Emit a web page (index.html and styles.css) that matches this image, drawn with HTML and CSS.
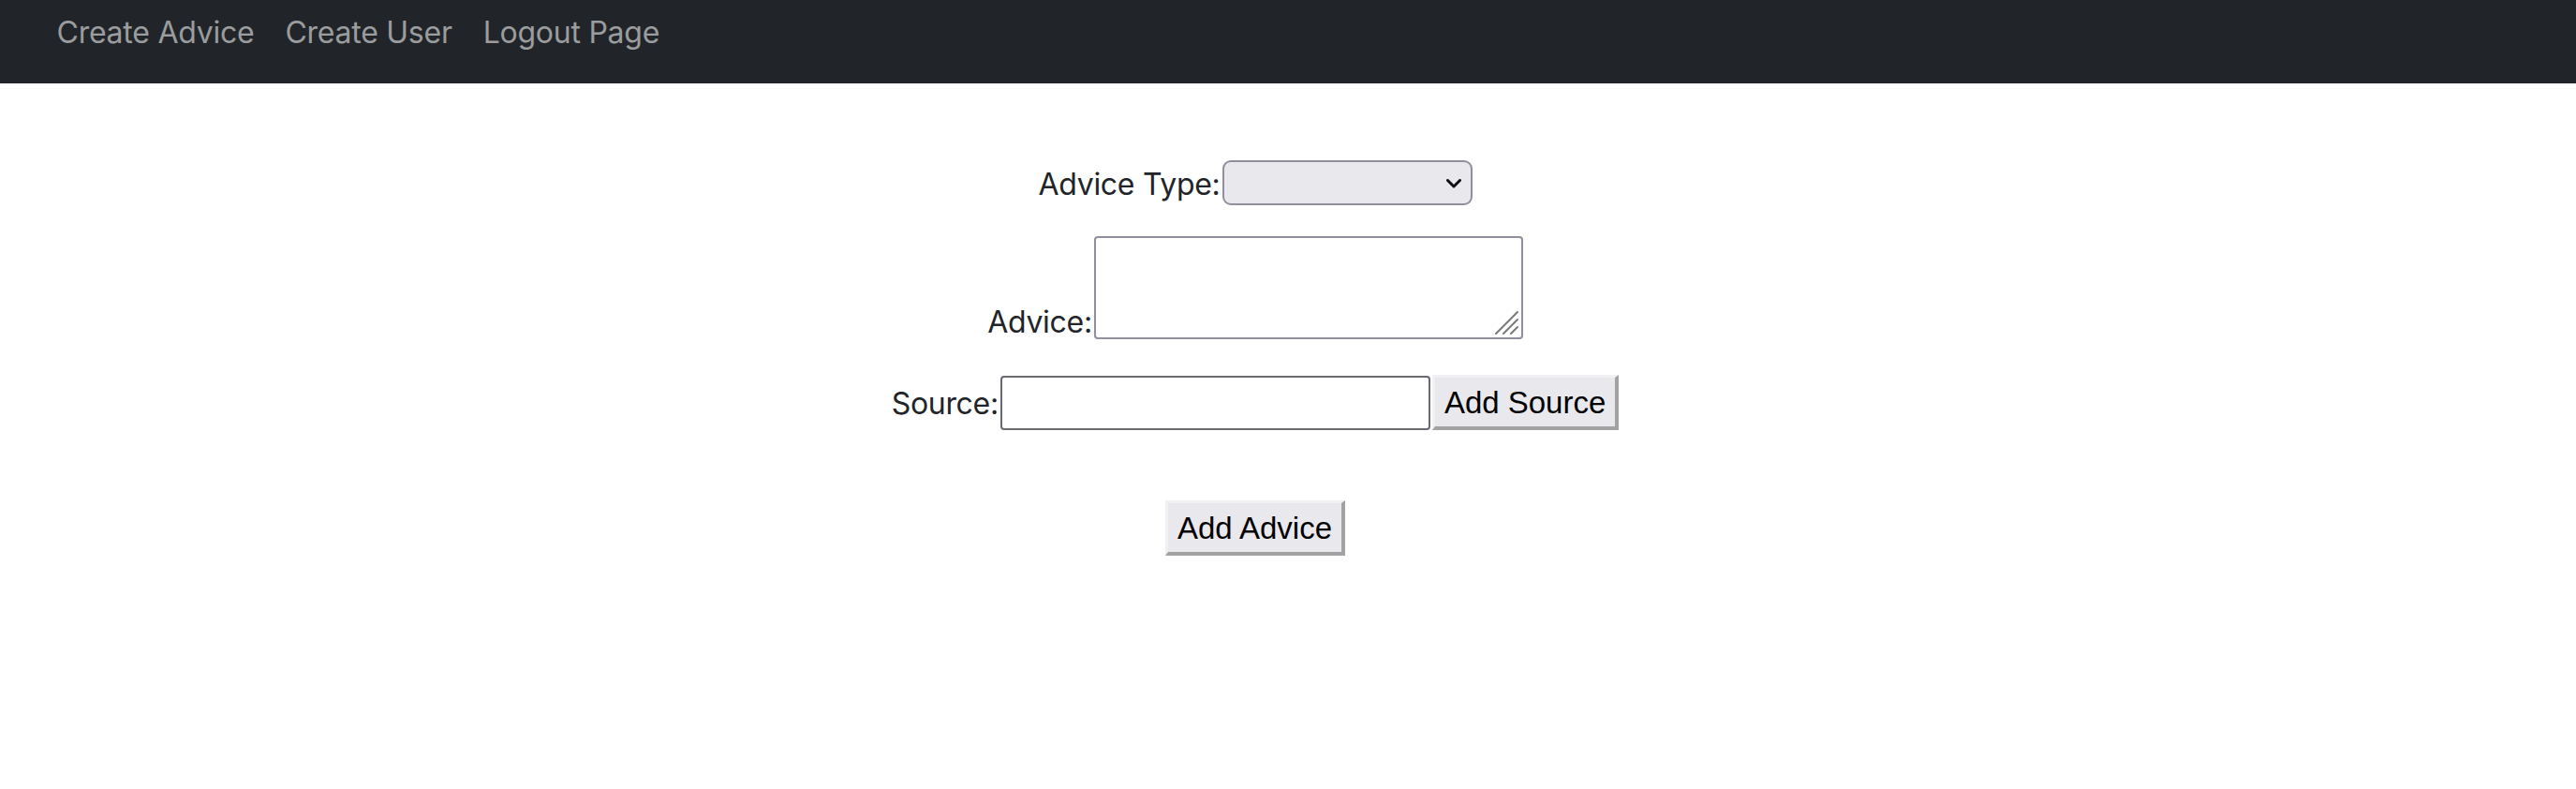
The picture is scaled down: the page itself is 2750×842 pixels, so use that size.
FILE: index.html
```html
<!DOCTYPE html>
<html lang="en">
<head>
<meta charset="utf-8">
<title>Create Advice</title>
<link rel="stylesheet" href="styles.css">
</head>
<body>
<nav class="navbar">
  <a class="nav-link" href="#">Create Advice</a>
  <a class="nav-link" href="#">Create User</a>
  <a class="nav-link" href="#">Logout Page</a>
</nav>
<main class="content">
  <form class="advice-form">
    <div class="row row-type">
      <label class="label label-mid" for="type">Advice Type:</label>
      <span class="select-wrap">
        <select id="type" class="select"></select>
        <svg class="chevron" width="16" height="10" viewBox="0 0 16 10"><path d="M1.5 1.5 L8 8 L14.5 1.5" fill="none" stroke="#111" stroke-width="3" stroke-linecap="round" stroke-linejoin="round"/></svg>
      </span>
    </div>
    <div class="row row-advice">
      <label class="label label-bottom" for="advice">Advice:</label>
      <span class="textarea-wrap">
        <textarea id="advice" class="textarea"></textarea>
        <svg class="grip" width="26" height="26" viewBox="0 0 26 26"><path d="M25 2 L2 25 M25 10 L10 25 M25 18 L18 25" fill="none" stroke="#7a7a7a" stroke-width="2" stroke-linecap="round"/></svg>
      </span>
    </div>
    <div class="row row-source">
      <label class="label label-mid" for="source">Source:</label>
      <input id="source" class="input" type="text">
      <button type="button" class="btn">Add Source</button>
    </div>
    <div class="row row-submit">
      <button type="submit" class="btn">Add Advice</button>
    </div>
  </form>
</main>
</body>
</html>
```

FILE: styles.css
```css
html, body {
  margin: 0;
  padding: 0;
  background: #ffffff;
}

body {
  font-family: Inter, "Liberation Sans", sans-serif;
  color: #212529;
}

.navbar {
  display: flex;
  align-items: flex-start;
  height: 89px;
  box-sizing: border-box;
  padding: 15px 0 0 44px;
  background: #212529;
}

.nav-link {
  display: block;
  padding: 0 16.5px;
  font-size: 32px;
  line-height: 40px;
  letter-spacing: -0.25px;
  color: #9b9c9e;
  text-decoration: none;
}

.content {
  padding: 82px 70px 0 0;
}

.advice-form {
  display: flex;
  flex-direction: column;
  align-items: center;
}

.row {
  display: flex;
  align-items: center;
  justify-content: center;
}

.row-advice {
  align-items: flex-end;
  margin-top: 33px;
}

.row-source {
  margin-top: 38px;
}

.row-submit {
  margin-top: 75px;
}

.label {
  font-size: 32px;
  line-height: 40px;
  letter-spacing: -0.3px;
  color: #212529;
  margin-right: 2px;
}

.label-mid {
  padding-top: 3px;
}

.label-bottom {
  margin-bottom: -2px;
}

.select-wrap {
  position: relative;
  display: block;
}

.select {
  display: block;
  appearance: none;
  -webkit-appearance: none;
  width: 267px;
  height: 48px;
  box-sizing: border-box;
  margin: 0;
  border: 2px solid #8f8f9d;
  border-radius: 9px;
  background: #e9e9ed;
}

.chevron {
  position: absolute;
  right: 12px;
  top: 20px;
}

.textarea-wrap {
  position: relative;
  display: block;
}

.textarea {
  display: block;
  width: 458px;
  height: 110px;
  box-sizing: border-box;
  margin: 0;
  border: 2px solid #8f8f9d;
  border-radius: 4px;
  background: #ffffff;
  resize: none;
}

.grip {
  position: absolute;
  right: 5px;
  bottom: 5px;
}

.input {
  display: block;
  width: 459px;
  height: 58px;
  box-sizing: border-box;
  margin: 0 2px 0 0;
  border: 2px solid #696974;
  border-radius: 4px;
  background: #ffffff;
}

.btn {
  display: block;
  height: 59px;
  box-sizing: border-box;
  margin: 0;
  padding: 0 10px;
  font-family: "Liberation Sans", Arial, sans-serif;
  font-size: 33px;
  line-height: 1;
  color: #000000;
  background: #e9e9ed;
  border-style: solid;
  border-width: 3px 4px 4px 3px;
  border-color: #f1f1f3 #a2a2a2 #a2a2a2 #f1f1f3;
  border-radius: 0;
}
```
